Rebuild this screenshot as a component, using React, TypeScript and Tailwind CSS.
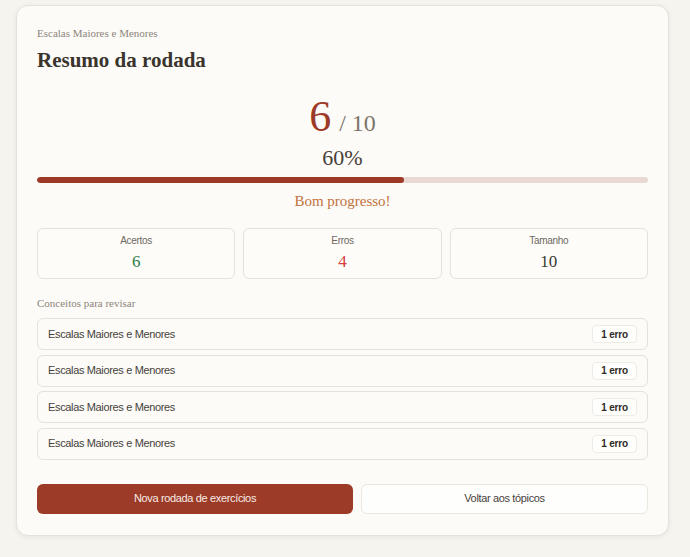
const serif = { fontFamily: '"Liberation Serif", "DejaVu Serif", serif' }

const stats = [
    { label: 'Acertos', value: '6', color: 'text-[#2f7d47]' },
    { label: 'Erros', value: '4', color: 'text-[#d63a3c]' },
    { label: 'Tamanho', value: '10', color: 'text-[#3b3731]' },
]

const concepts = [
    { name: 'Escalas Maiores e Menores', errors: 1 },
    { name: 'Escalas Maiores e Menores', errors: 1 },
    { name: 'Escalas Maiores e Menores', errors: 1 },
    { name: 'Escalas Maiores e Menores', errors: 1 },
]

export default function App() {
    const correct = 6
    const total = 10
    const pct = Math.round((correct / total) * 100)

    return (
        <div className="min-h-[557px] bg-[#f6f4ef] pt-[5px] pl-4 font-['Liberation_Sans',Arial,sans-serif]">
            <div className="w-[653px] rounded-xl border border-[#e6e2da] bg-[#fcfbf7] px-5 pt-[19px] pb-[21px] shadow-[0_1px_4px_rgba(60,50,40,0.08)]">
                <p style={serif} className="text-[11px] leading-4 text-[#8d857b]">Escalas Maiores e Menores</p>
                <h1 style={serif} className="mt-[5px] text-[21px] leading-7 font-bold text-[#3a342d]">Resumo da rodada</h1>

                <div style={serif} className="mt-[19px] flex h-12 items-baseline justify-center">
                    <span className="text-[44px] leading-[48px] text-[#9c3a27]">{correct}</span>
                    <span className="ml-2 text-[24px] text-[#7d746a]">/ {total}</span>
                </div>
                <p style={serif} className="mt-[3px] text-center text-[22px] leading-7 text-[#46413b]">{pct}%</p>

                <div className="mt-[5px] h-[6px] w-full overflow-hidden rounded-full bg-[#e8d9d3]">
                    <div className="h-full rounded-full bg-[#9c3a27]" style={{ width: `${pct}%` }}></div>
                </div>
                <p style={serif} className="mt-2 text-center text-[15px] leading-5 text-[#c1723c]">Bom progresso!</p>

                <div className="mt-[17px] grid grid-cols-3 gap-2">
                    {stats.map((s) => (
                        <div key={s.label} className="flex h-[51px] flex-col items-center justify-center gap-[2px] rounded-md border border-[#e6e1d9] bg-[#fdfcf9]">
                            <span className="text-[10px] leading-[14px] tracking-[-0.3px] text-[#6e6861]">{s.label}</span>
                            <span style={serif} className={`text-[17px] leading-6 ${s.color}`}>{s.value}</span>
                        </div>
                    ))}
                </div>

                <p style={serif} className="mt-4 text-[11px] leading-4 text-[#8d857b]">Conceitos para revisar</p>
                <div className="mt-[7px] flex flex-col gap-[4.5px]">
                    {concepts.map((c, i) => (
                        <div key={i} className="flex h-8 items-center justify-between rounded-md border border-[#e6e1d9] bg-[#fcfbf7] pr-[10px] pl-[10px]">
                            <span className="text-[11px] tracking-[-0.35px] text-[#46423c]">{c.name}</span>
                            <span className="flex h-[18px] w-[45px] items-center justify-center rounded border border-[#eeebe5] bg-[#fefefd] text-[10px] font-bold tracking-[-0.2px] text-[#2e2a25]">
                                {c.errors} erro
                            </span>
                        </div>
                    ))}
                </div>

                <div className="mt-[24px] grid grid-cols-[316px_1fr] gap-2">
                    <button className="h-[30px] rounded-md bg-[#9b3b28] text-[11px] tracking-[-0.35px] text-[#f7ebe6]">Nova rodada de exercícios</button>
                    <button className="h-[30px] rounded-md border border-[#ebe7df] bg-[#fefefc] text-[11px] tracking-[-0.35px] text-[#48433d]">Voltar aos tópicos</button>
                </div>
            </div>
        </div>
    )
}
